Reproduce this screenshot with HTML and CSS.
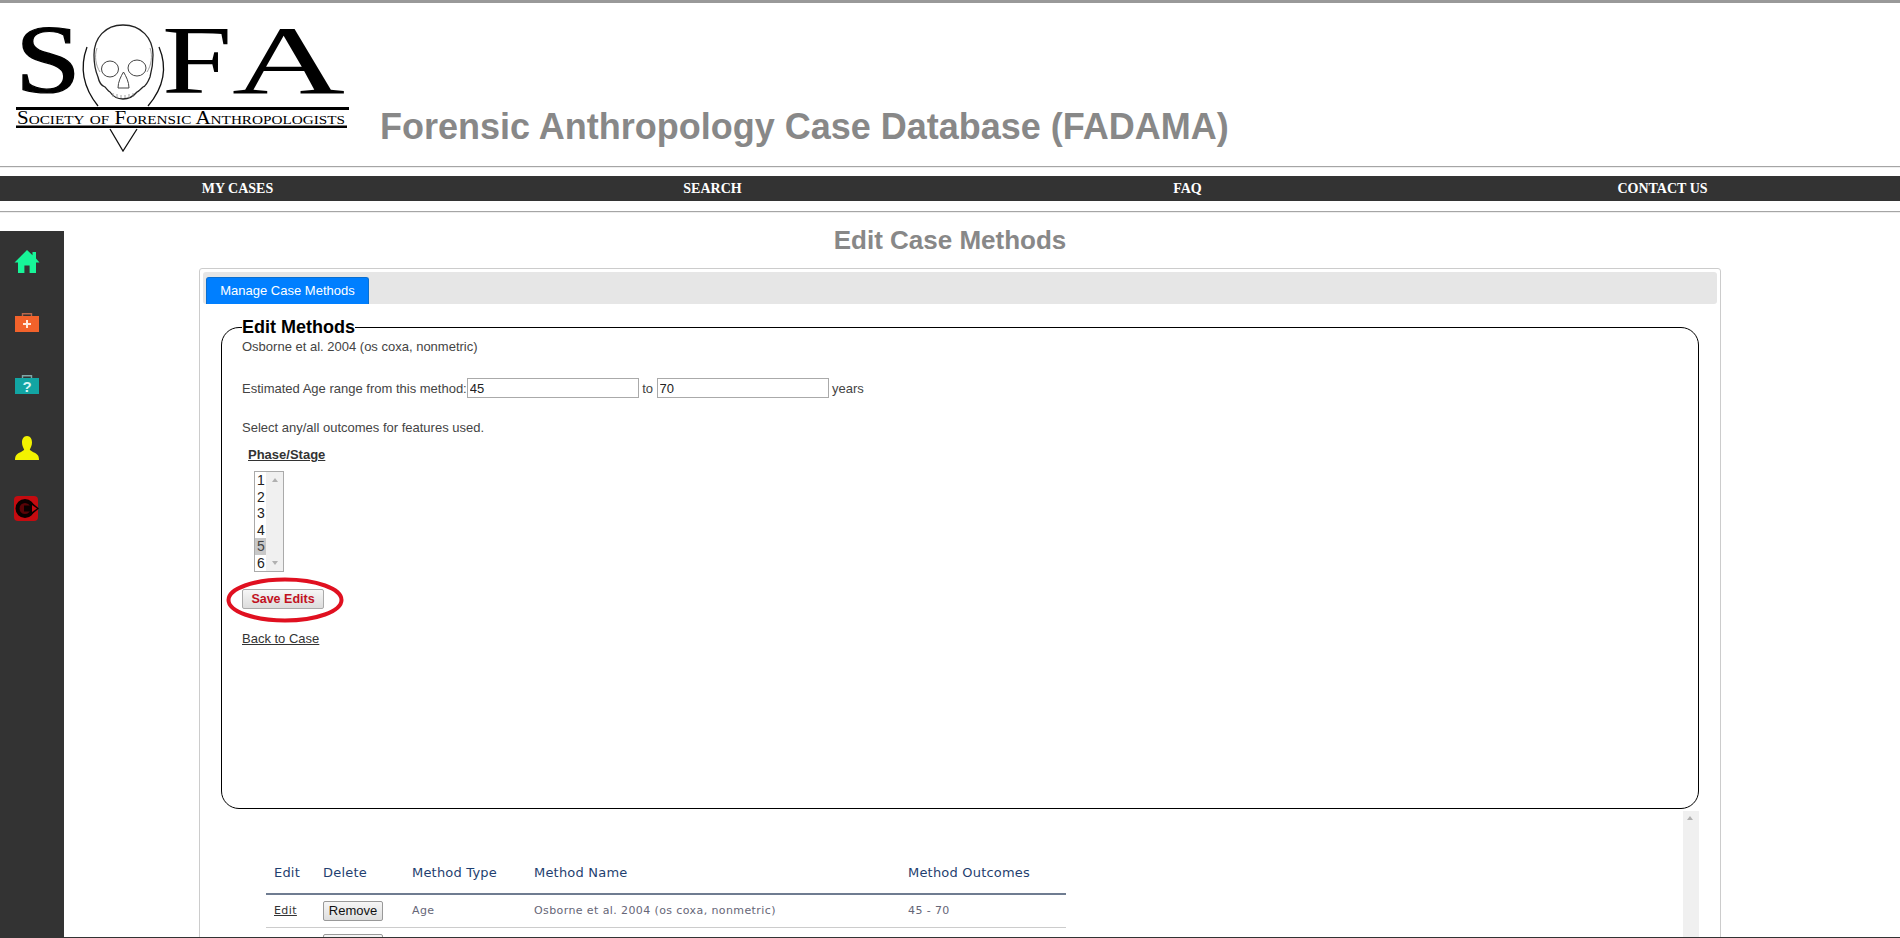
FILE: index.html
```html
<!DOCTYPE html>
<html lang="en">
<head>
<meta charset="utf-8">
<title>Edit Case Methods</title>
<link rel="stylesheet" href="styles.css">
</head>
<body>
<div class="page">
  <header class="masthead">
    <svg class="logo" viewBox="0 0 360 160" width="360" height="160" aria-label="Society of Forensic Anthropologists logo">
      <text class="logo-big logo-s" x="15" y="92" font-size="98" textLength="66" lengthAdjust="spacingAndGlyphs">S</text>
      <text class="logo-big" x="162" y="93" font-size="98" textLength="70" lengthAdjust="spacingAndGlyphs">F</text>
      <text class="logo-big" x="232" y="93" font-size="98" textLength="113" lengthAdjust="spacingAndGlyphs">A</text>
      <path class="sk" d="M123 25C105 25 94 38 94 55C94 62 95 70 98 77C99 82 102 86 105 87C107 89 108 91 110 92C114 98 119 99 123 99C127 99 132 98 137 92C139 91 141 89 143 87C146 86 148 82 150 77C152 70 153 62 153 55C153 38 141 25 123 25Z"/>
      <ellipse class="sk-thin" cx="110" cy="69" rx="8.500" ry="8"/>
      <ellipse class="sk-thin" cx="137" cy="68" rx="9" ry="8"/>
      <path class="sk-thin" d="M123.500 72C121 76 118 82 118 88H129C129 82 126 76 123.500 72Z"/>
      <path class="sk-faint" d="M97 48C94 56 96 66 100 72M150 48C153 56 151 66 147 72M113 93V97M117 94V98M121 95V98M125 95V98M129 94V98M133 93V97"/>
      <path class="pin" d="M87 47C80 66 82 86 98 106M159 47C167 66 165 86 148 106M110 129L123 151L137 129"/>
      <rect x="16" y="107" width="333" height="3"/>
      <text class="logo-small" x="17" y="124" textLength="328" lengthAdjust="spacingAndGlyphs">Society of Forensic Anthropologists</text>
      <rect x="16" y="125.500" width="331" height="2.500"/>
    </svg>
    <h1 class="site-title">Forensic Anthropology Case Database (FADAMA)</h1>
  </header>
  <div class="rule"></div>
  <nav class="topnav">
    <a href="#">MY CASES</a>
    <a href="#">SEARCH</a>
    <a href="#">FAQ</a>
    <a href="#">CONTACT US</a>
  </nav>
  <div class="rule rule-low"></div>

  <div class="body-row">
    <aside class="sidebar">
      <svg class="side-icon" viewBox="0 0 24 24" width="24" height="24"><path fill="#17f598" d="M12 0L17.500 5.200V2H21V8.500L24.500 12.500H21V23H14.600V15.500H9.400V23H3V12.500H-.5Z"/></svg>
      <svg class="side-icon" viewBox="0 0 24 24" width="24" height="24"><path fill="none" stroke="#b9674a" stroke-width="1.400" d="M7.500 5V1.700H16.500V5"/><rect y="4" width="24" height="16" fill="#f2622b"/><path fill="#ffe8dc" d="M11 8h2v3h3v2h-3v3h-2v-3H8v-2h3z"/></svg>
      <svg class="side-icon" viewBox="0 0 24 24" width="24" height="24"><path fill="none" stroke="#7fa8a8" stroke-width="1.400" d="M7.500 5V1.700H16.500V5"/><rect y="4" width="24" height="16" fill="#12a5a3"/><text class="q-mark" x="12" y="18" text-anchor="middle">?</text></svg>
      <svg class="side-icon" viewBox="0 0 24 24" width="24" height="24"><path fill="#f2f200" d="M12 0C15.500 0 17 3 17 6.500C17 9.500 15.600 12 14.800 13.500C15.500 15.500 21 16.500 23 19.500C23.800 20.700 24 22.500 24 24H0C0 22.500 .2 20.700 1 19.500C3 16.500 8.500 15.500 9.200 13.500C8.400 12 7 9.500 7 6.500C7 3 8.500 0 12 0Z"/></svg>
      <svg class="side-icon exit-icon" viewBox="0 0 26 26" width="26" height="26"><rect width="24" height="25" rx="4" fill="#c50b10"/><circle cx="11" cy="12.500" r="7.500" fill="#5a0306" stroke="#0a0000" stroke-width="4"/><path fill="#0a0000" d="M10 9.500H16.500V5.500L25 12.500L16.500 19.500V15.500H10Z"/><path fill="#c50b10" d="M18 9L23 12.500L18 16Z"/></svg>
    </aside>

    <main class="content">
      <h2 class="page-title">Edit Case Methods</h2>
      <section class="tabs">
        <div class="tab-bar"><a class="tab" href="#">Manage Case Methods</a></div>
        <div class="tab-panel">
          <fieldset class="method-box">
            <legend>Edit Methods</legend>
            <p class="line-name">Osborne et al. 2004 (os coxa, nonmetric)</p>
            <form class="age-row">
              <label for="age-from">Estimated Age range from this method:</label><input id="age-from" class="age-input" type="text" value="45">
              <span>to</span>
              <input class="age-input" type="text" value="70">
              <span>years</span>
            </form>
            <p class="line-select">Select any/all outcomes for features used.</p>
            <h3 class="stage-title">Phase/Stage</h3>
            <div class="listbox" role="listbox">
              <div class="list-options">
                <div>1</div><div>2</div><div>3</div><div>4</div><div class="picked">5</div><div>6</div>
              </div>
              <div class="list-track"><i class="tri-up"></i><i class="tri-down"></i></div>
            </div>
            <div class="save-wrap">
              <button class="save-btn" type="button">Save Edits</button>
              <svg class="save-ring" viewBox="0 0 120 48" width="120" height="48"><ellipse cx="60" cy="24" rx="56.500" ry="20.500"/></svg>
            </div>
            <a class="back-link" href="#">Back to Case</a>
          </fieldset>

          <div class="list-area">
            <table class="methods">
              <colgroup><col class="c1"><col class="c2"><col class="c3"><col class="c4"><col class="c5"></colgroup>
              <thead>
                <tr><th>Edit</th><th>Delete</th><th>Method Type</th><th>Method Name</th><th>Method Outcomes</th></tr>
              </thead>
              <tbody>
                <tr><td><a href="#">Edit</a></td><td><button class="remove" type="button">Remove</button></td><td>Age</td><td>Osborne et al. 2004 (os coxa, nonmetric)</td><td>45 - 70</td></tr>
                <tr><td></td><td><button class="remove remove-clipped" type="button" aria-label="Remove"></button></td><td></td><td></td><td></td></tr>
              </tbody>
            </table>
            <div class="area-track"><i class="tri-up"></i></div>
          </div>
        </div>
      </section>
    </main>
  </div>
</div>
</body>
</html>
```
FILE: styles.css
```css
* { box-sizing: border-box; }
html, body { margin: 0; padding: 0; background: #fff; }
body { font-family: "Liberation Sans", Arial, sans-serif; color: #444; }
.page { height: 938px; overflow: hidden; border-bottom: 1px solid #333; border-top: 3px solid #999; }

.masthead { display: flex; align-items: flex-start; height: 163px; }
.logo { flex: none; margin-top: -3px; fill: #000; }
.logo-big { font-family: "Liberation Serif", serif; }
.logo-s { stroke: #000; stroke-width: 1.200; }
.logo-small { font-family: "Liberation Serif", serif; font-size: 18px; font-variant: small-caps; }
.sk { fill: #fff; stroke: #222; stroke-width: 1.300; }
.sk-thin { fill: none; stroke: #444; stroke-width: 1; }
.sk-faint { fill: none; stroke: #888; stroke-width: .8; }
.pin { fill: none; stroke: #111; stroke-width: 1.300; }
.site-title { margin: 104px 0 0 20px; font-size: 36px; line-height: 40px; font-weight: bold; color: #888; white-space: nowrap; }

.rule { height: 2px; border-top: 1px solid #a5a5a5; border-bottom: 1px solid #eee; }
.rule-low { margin-top: 10px; }
.topnav { display: grid; grid-template-columns: repeat(4, 1fr); height: 25px; margin-top: 8px; background: #333; align-items: center; text-align: center; }
.topnav a { color: #fff; text-decoration: none; font: bold 14px/25px "Liberation Serif", serif; }

.body-row { display: flex; align-items: stretch; }
.sidebar { flex: none; width: 64px; height: 720px; margin-top: 18px; background: #333; display: flex; flex-direction: column; align-items: flex-start; padding: 19px 0 0 15px; }
.side-icon { display: block; overflow: visible; margin-bottom: 38px; }
.exit-icon { margin-top: -2px; margin-left: -1px; }
.q-mark { font: bold 15px "Liberation Sans", sans-serif; fill: #d6f5f4; }

.content { flex: none; width: 1657px; padding: 12px 0 0 135px; }
.page-title { margin: 0 20px 13px 0; text-align: center; font-size: 26px; line-height: 30px; font-weight: bold; color: #888; }

.tabs { border: 1px solid #ccc; border-radius: 3px; padding: 3px; }
.tab-bar { height: 32px; padding: 5px 0 0 3px; background: #e6e6e6; border-radius: 3px; }
.tab { display: block; width: 163px; height: 27px; background: #007fff; color: #fff; border: 1px solid #0a6fd0; border-bottom: 0; border-radius: 3px 3px 0 0; font-size: 13px; line-height: 26px; text-align: center; text-decoration: none; }
.tab-panel { padding: 13px 18px 0; }

.method-box { margin: 0; padding: 0 20px; height: 492px; min-width: 0; border: 1px solid #000; border-radius: 18px; font-size: 13px; }
.method-box legend { padding: 0; color: #000; font-size: 18px; line-height: 20px; font-weight: bold; }
.line-name { margin: 2px 0 0; line-height: 16px; height: 16px; }
.age-row { display: flex; align-items: center; height: 20px; margin-top: 23px; }
.age-row label { flex: none; }
.age-row span { flex: none; margin: 0 3.500px; }
.age-input { width: 172px; height: 20px; padding: 0 2px; border: 1px solid #aaa; font: 13px "Liberation Sans", sans-serif; color: #222; }
.line-select { margin: 22px 0 0; line-height: 16px; }
.stage-title { margin: 10px 0 0 6px; font-size: 13px; line-height: 18px; font-weight: bold; text-decoration: underline; color: #333; }

.listbox { display: flex; width: 30px; height: 101px; margin: 7px 0 0 12px; border: 1px solid #aaa; background: #fff; overflow: hidden; }
.list-options { flex: none; width: 11px; font-size: 14px; line-height: 16.500px; color: #222; }
.list-options div { padding-left: 2px; }
.list-options .picked { background: #c8c8c8; color: #444; }
.list-track { flex: 1; display: flex; flex-direction: column; justify-content: space-between; align-items: center; padding: 6px 0; background: #f0f0f0; }
.tri-up { display: block; width: 0; height: 0; border: 3.500px solid transparent; border-top: 0; border-bottom: 4px solid #b0b0b0; }
.tri-down { display: block; width: 0; height: 0; border: 3.500px solid transparent; border-bottom: 0; border-top: 4px solid #b0b0b0; }

.save-wrap { position: relative; height: 20px; margin-top: 17px; }
.save-btn { display: block; width: 82px; height: 20px; padding: 0; border: 1px solid #aaa; border-radius: 2px; background: linear-gradient(#f6f6f6, #dcdcdc); color: #c1121f; font: bold 12.500px "Liberation Sans", sans-serif; }
.save-ring { position: absolute; left: -17px; top: -13px; fill: none; stroke: #e01020; stroke-width: 4; }
.back-link { display: block; width: max-content; margin-top: 21px; font-size: 13px; line-height: 18px; color: #333; }

.list-area { display: flex; justify-content: space-between; height: 128px; margin-top: 2px; padding-left: 45px; }
.methods { width: 800px; height: 0; table-layout: fixed; border-collapse: collapse; margin-top: 40px; font: 11px "DejaVu Sans", sans-serif; letter-spacing: .4px; color: #667; }
.c1 { width: 49px; } .c2 { width: 89px; } .c3 { width: 122px; } .c4 { width: 374px; } .c5 { width: 166px; }
.methods th { height: 43px; padding: 0 8px; text-align: left; font-weight: normal; font-size: 13px; letter-spacing: .2px; color: #1f3f70; border-bottom: 2px solid #6f7c91; }
.methods td { height: 33px; padding: 0 8px; border-bottom: 1px solid #ccc; vertical-align: middle; }
.methods a { color: #333; }
.remove { display: block; width: 60px; height: 20px; padding: 0; border: 1px solid #999; border-radius: 2px; background: linear-gradient(#f6f6f6, #dedede); font: 13px "Liberation Sans", sans-serif; color: #111; }
.area-track { flex: none; width: 16px; height: 100%; background: #f0f0f0; padding: 5px 0 0 4px; }
```
